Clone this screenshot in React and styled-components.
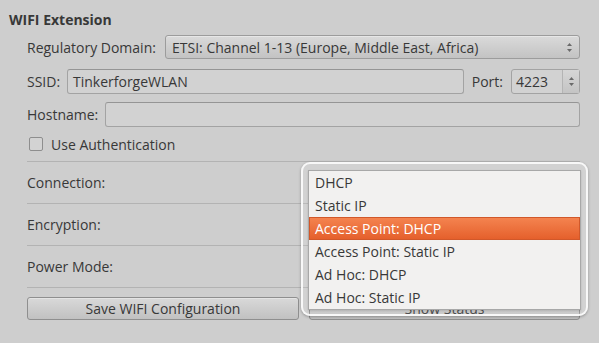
import React from 'react';
import styled, { createGlobalStyle } from 'styled-components';

const Global = createGlobalStyle`
  html, body {
    margin: 0;
    padding: 0;
    background: #cecece;
  }
  body {
    font-family: "Open Sans", "DejaVu Sans", sans-serif;
    font-size: 14px;
    color: #383838;
  }
`;

const Page = styled.div`
  position: relative;
  width: 599px;
  height: 343px;
  box-sizing: border-box;
  padding: 11px 19px 0 9px;
  overflow: hidden;
`;

const Title = styled.div`
  font-weight: 700;
  font-size: 14px;
  line-height: 18px;
  height: 18px;
`;

const Section = styled.div`
  display: flex;
  flex-direction: column;
  padding-left: 18px;
  margin-top: 6px;
`;

const Row = styled.div`
  display: flex;
  align-items: center;
  gap: 8px;
  height: 24px;
  margin-top: ${p => p.top || 0}px;
`;

const Label = styled.span`
  flex: none;
  width: ${p => (p.w ? `${p.w}px` : 'auto')};
  white-space: nowrap;
`;

const Combo = styled.div`
  flex: 1;
  height: 24px;
  box-sizing: border-box;
  display: flex;
  align-items: center;
  padding: 0 6px;
  border: 1px solid #9c9c9c;
  border-radius: 3px;
  background: linear-gradient(#dadada, #c3c3c3);
  box-shadow: inset 0 1px 0 rgba(255, 255, 255, 0.35);
`;

const ComboText = styled.span`
  flex: 1;
  white-space: nowrap;
`;

const Arrows = styled.svg`
  flex: none;
`;

const Edit = styled.div`
  flex: 1;
  height: 25px;
  box-sizing: border-box;
  display: flex;
  align-items: center;
  padding-left: 5px;
  border: 1px solid #a3a3a3;
  border-top-color: #959595;
  border-radius: 3px;
  background: #d2d2d2;
`;

const Spin = styled.div`
  flex: none;
  width: 69px;
  height: 25px;
  box-sizing: border-box;
  display: flex;
  border: 1px solid #a3a3a3;
  border-radius: 3px;
  background: #d2d2d2;
`;

const SpinValue = styled.div`
  flex: 1;
  display: flex;
  align-items: center;
  padding-left: 4px;
`;

const SpinButtons = styled.div`
  width: 16px;
  display: flex;
  align-items: center;
  justify-content: center;
  border-left: 1px solid #b4b4b4;
  background: linear-gradient(#d6d6d6, #c4c4c4);
`;

const Check = styled.span`
  width: 12px;
  height: 12px;
  margin-left: 2px;
  border: 1px solid #8e8e8e;
  border-radius: 2px;
  background: #d3d3d3;
`;

const Separator = styled.div`
  height: 1px;
  background: #b3b3b3;
  margin-top: ${p => p.top || 0}px;
`;

const FieldRow = styled.div`
  display: flex;
  align-items: center;
  height: 41px;
`;

const Buttons = styled.div`
  display: grid;
  grid-template-columns: 272px 271px;
  gap: 10px;
  margin-top: 9px;
`;

const Button = styled.div`
  height: 23px;
  box-sizing: border-box;
  display: flex;
  align-items: center;
  justify-content: center;
  border: 1px solid #8f8f8f;
  border-radius: 3px;
  background: linear-gradient(#d9d9d9, #c1c1c1);
  box-shadow: inset 0 1px 0 rgba(255, 255, 255, 0.3);
`;

const Popup = styled.div`
  position: absolute;
  left: 301px;
  top: 162px;
  width: 287px;
  height: 154px;
  box-sizing: border-box;
  padding: 6px 5px 5px;
  border: 2px solid rgba(250, 250, 250, 0.95);
  border-radius: 9px;
  background: rgba(240, 240, 240, 0.12);
  box-shadow: 0 1px 3px rgba(0, 0, 0, 0.3);
`;

const List = styled.div`
  border: 1px solid #a8a8a8;
  background: #f2f1f0;
  box-shadow: 0 1px 2px rgba(0, 0, 0, 0.15);
`;

const Item = styled.div`
  height: 23px;
  box-sizing: border-box;
  display: flex;
  align-items: center;
  padding-left: 5px;
  white-space: nowrap;
  color: ${p => (p.active ? '#ffffff' : '#383838')};
  background: ${p => (p.active ? 'linear-gradient(#f4834f, #e5602c)' : 'transparent')};
  border: 1px solid ${p => (p.active ? '#d1582a' : 'transparent')};
`;

function UpDown() {
  return (
    <Arrows width="7" height="11" viewBox="0 0 7 11">
      <path d="M3.5 1 L6 4 L1 4 Z" fill="#6a6a6a" />
      <path d="M3.5 10 L6 7 L1 7 Z" fill="#6a6a6a" />
    </Arrows>
  );
}

const connections = [
  'DHCP',
  'Static IP',
  'Access Point: DHCP',
  'Access Point: Static IP',
  'Ad Hoc: DHCP',
  'Ad Hoc: Static IP',
];

function App() {
  return (
    <>
      <Global />
      <Page>
        <Title>WIFI Extension</Title>
        <Section>
          <Row>
            <Label w={130}>Regulatory Domain:</Label>
            <Combo>
              <ComboText>ETSI: Channel 1-13 (Europe, Middle East, Africa)</ComboText>
              <UpDown />
            </Combo>
          </Row>
          <Row top={10}>
            <Label w={32}>SSID:</Label>
            <Edit>TinkerforgeWLAN</Edit>
            <Label>Port:</Label>
            <Spin>
              <SpinValue>4223</SpinValue>
              <SpinButtons>
                <UpDown />
              </SpinButtons>
            </Spin>
          </Row>
          <Row top={9}>
            <Label w={70}>Hostname:</Label>
            <Edit />
          </Row>
          <Row top={6}>
            <Check />
            <Label>Use Authentication</Label>
          </Row>
          <Separator top={5} />
          <FieldRow>Connection:</FieldRow>
          <Separator />
          <FieldRow>Encryption:</FieldRow>
          <Separator />
          <FieldRow>Power Mode:</FieldRow>
          <Separator />
          <Buttons>
            <Button>Save WIFI Configuration</Button>
            <Button>Show Status</Button>
          </Buttons>
        </Section>
        <Popup>
          <List>
            {connections.map((c, i) => (
              <Item key={c} active={i === 2}>{c}</Item>
            ))}
          </List>
        </Popup>
      </Page>
    </>
  );
}

export default App;
